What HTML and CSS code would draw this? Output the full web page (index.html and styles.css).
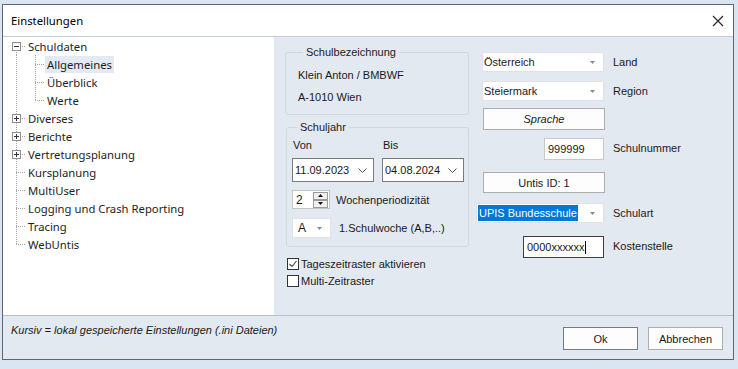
FILE: index.html
```html
<!DOCTYPE html>
<html lang="de">
<head>
    <meta charset="UTF-8">
    <meta name="viewport" content="width=device-width, initial-scale=1.0">
    <title>Einstellungen</title>
    <link rel="stylesheet" href="styles.css">
</head>
<body>
<div class="window">
    <div class="titlebar">
        <span class="title">Einstellungen</span>
        <svg class="close" width="12" height="12" viewBox="0 0 12 12"><path d="M1 1L11 11M11 1L1 11" stroke="#222" stroke-width="1.1"/></svg>
    </div>

    <div class="main">
        <!-- navigation tree -->
        <div class="tree">
            <div class="node"><span class="g first"><svg width="9" height="9"><rect x="0.5" y="0.5" width="8" height="8" fill="#fff" stroke="#8f8f8f"/><path d="M2 4.5H7" stroke="#333"/></svg></span><span class="lbl">Schuldaten</span></div>
            <div class="node"><span class="g pipe"></span><span class="g tee"></span><span class="lbl selected">Allgemeines</span></div>
            <div class="node"><span class="g pipe"></span><span class="g tee"></span><span class="lbl">Überblick</span></div>
            <div class="node"><span class="g pipe"></span><span class="g elbow"></span><span class="lbl">Werte</span></div>
            <div class="node"><span class="g tee"><svg width="9" height="9"><rect x="0.5" y="0.5" width="8" height="8" fill="#fff" stroke="#8f8f8f"/><path d="M2 4.5H7M4.5 2V7" stroke="#333"/></svg></span><span class="lbl">Diverses</span></div>
            <div class="node"><span class="g tee"><svg width="9" height="9"><rect x="0.5" y="0.5" width="8" height="8" fill="#fff" stroke="#8f8f8f"/><path d="M2 4.5H7M4.5 2V7" stroke="#333"/></svg></span><span class="lbl">Berichte</span></div>
            <div class="node"><span class="g tee"><svg width="9" height="9"><rect x="0.5" y="0.5" width="8" height="8" fill="#fff" stroke="#8f8f8f"/><path d="M2 4.5H7M4.5 2V7" stroke="#333"/></svg></span><span class="lbl">Vertretungsplanung</span></div>
            <div class="node"><span class="g tee"></span><span class="lbl">Kursplanung</span></div>
            <div class="node"><span class="g tee"></span><span class="lbl">MultiUser</span></div>
            <div class="node"><span class="g tee"></span><span class="lbl">Logging und Crash Reporting</span></div>
            <div class="node"><span class="g tee"></span><span class="lbl">Tracing</span></div>
            <div class="node"><span class="g elbow"></span><span class="lbl">WebUntis</span></div>
        </div>

        <div class="panel">
            <div class="col-left">
                <fieldset class="group group-name">
                    <legend>Schulbezeichnung</legend>
                    <div class="line">Klein Anton / BMBWF</div>
                    <div class="line">A-1010 Wien</div>
                </fieldset>

                <fieldset class="group group-year">
                    <legend>Schuljahr</legend>
                    <div class="dates">
                        <div class="date-col">
                            <div class="cap">Von</div>
                            <div class="date">11.09.2023<svg width="9" height="5"><path d="M0.5 0.5L4.5 4.5L8.5 0.5" fill="none" stroke="#555"/></svg></div>
                        </div>
                        <div class="date-col">
                            <div class="cap">Bis</div>
                            <div class="date">04.08.2024<svg width="9" height="5"><path d="M0.5 0.5L4.5 4.5L8.5 0.5" fill="none" stroke="#555"/></svg></div>
                        </div>
                    </div>
                    <div class="opt spin-row">
                        <div class="spin">
                            <span class="spin-val">2</span>
                            <span class="spin-btns">
                                <span class="sb"><svg width="5" height="3"><path d="M0 3H5L2.5 0Z" fill="#111"/></svg></span>
                                <span class="sb"><svg width="5" height="3"><path d="M0 0H5L2.5 3Z" fill="#111"/></svg></span>
                            </span>
                        </div>
                        <span>Wochenperiodizität</span>
                    </div>
                    <div class="opt week-row">
                        <div class="combo combo-a">A<svg width="5" height="3"><path d="M0 0H5L2.5 3Z" fill="#8a8a8a"/></svg></div>
                        <span>1.Schulwoche (A,B,..)</span>
                    </div>
                </fieldset>

                <div class="check check-first">
                    <span class="cb"><svg width="10" height="10"><path d="M1.5 5L4 7.5L8.5 2" fill="none" stroke="#444" stroke-width="1.1"/></svg></span>
                    Tageszeitraster aktivieren
                </div>
                <div class="check">
                    <span class="cb"></span>
                    Multi-Zeitraster
                </div>
            </div>

            <div class="col-right">
                <div class="frow r1">
                    <div class="field"><div class="combo w122">Österreich<svg width="5" height="3"><path d="M0 0H5L2.5 3Z" fill="#8a8a8a"/></svg></div></div>
                    <span class="flabel">Land</span>
                </div>
                <div class="frow r2">
                    <div class="field"><div class="combo w122">Steiermark<svg width="5" height="3"><path d="M0 0H5L2.5 3Z" fill="#8a8a8a"/></svg></div></div>
                    <span class="flabel">Region</span>
                </div>
                <div class="frow r3">
                    <div class="field"><div class="btn wide italic">Sprache</div></div>
                </div>
                <div class="frow r4">
                    <div class="field"><div class="input w60">999999</div></div>
                    <span class="flabel">Schulnummer</span>
                </div>
                <div class="frow r5">
                    <div class="field"><div class="btn wide">Untis ID: 1</div></div>
                </div>
                <div class="frow r6">
                    <div class="field"><div class="combo w128"><span class="sel">UPIS Bundesschule</span><svg width="5" height="3"><path d="M0 0H5L2.5 3Z" fill="#8a8a8a"/></svg></div></div>
                    <span class="flabel">Schulart</span>
                </div>
                <div class="frow r7">
                    <div class="field"><div class="input w81 focus">0000xxxxxx<span class="caret"></span></div></div>
                    <span class="flabel">Kostenstelle</span>
                </div>
            </div>
        </div>
    </div>

    <div class="footer">
        <span class="note">Kursiv = lokal gespeicherte Einstellungen (.ini Dateien)</span>
        <div class="buttons">
            <div class="btn dlg default">Ok</div>
            <div class="btn dlg">Abbrechen</div>
        </div>
    </div>
</div>
</body>
</html>
```

FILE: styles.css
```css
body {
    margin: 0;
    background-color: #dbe5f2;
    font-family: "Liberation Sans", Arial, sans-serif;
    font-size: 11px;
    color: #1a1a1a;
}
.window {
    margin: 4px 0 0 2px;
    width: 730px;
    border: 1px solid #5f6670;
    background-color: #e3e9f0;
    display: flex;
    flex-direction: column;
}
.titlebar {
    height: 31px;
    background-color: #fff;
    display: flex;
    align-items: center;
    justify-content: space-between;
    padding: 0 9px 0 8px;
}
.title {
    font-family: "Noto Sans", sans-serif;
    font-size: 11.3px;
    color: #000;
}
.main {
    height: 278px;
    border-top: 1px solid #c5ccd5;
    display: flex;
}

/* tree */
.tree {
    --v: repeating-linear-gradient(to bottom, #a3a3a3 0 1px, transparent 1px 2px);
    --h: repeating-linear-gradient(to right, #a3a3a3 0 1px, transparent 1px 2px);
    width: 271px;
    background-color: #fff;
    padding: 0 0 0 4px;
    box-sizing: border-box;
    font-family: "Noto Sans", sans-serif;
    font-size: 11.3px;
    color: #1e1e1e;
}
.node {
    display: flex;
    align-items: center;
    height: 18px;
}
.g {
    width: 19px;
    height: 18px;
    flex: none;
    display: flex;
    align-items: center;
    padding-left: 5px;
    box-sizing: border-box;
    background-repeat: no-repeat;
}
.g svg {
    display: block;
}
.tee {
    background-image: var(--v), var(--h);
    background-size: 1px 18px, 10px 1px;
    background-position: 9px 0, 9px 9px;
}
.elbow {
    background-image: var(--v), var(--h);
    background-size: 1px 10px, 10px 1px;
    background-position: 9px 0, 9px 9px;
}
.first {
    background-image: var(--v), var(--h);
    background-size: 1px 9px, 10px 1px;
    background-position: 9px 9px, 9px 9px;
}
.pipe {
    background-image: var(--v);
    background-size: 1px 18px;
    background-position: 9px 0;
}
.lbl {
    padding: 0 2px;
    line-height: 17px;
    white-space: nowrap;
}
.lbl.selected {
    background-color: #e4eaf3;
}

/* settings panel */
.panel {
    flex: 1;
    display: flex;
    gap: 7px;
    padding: 9px 0 0 11px;
}
.col-left {
    width: 184px;
    display: flex;
    flex-direction: column;
}
.group {
    margin: 0;
    border: 1px solid #d2d8df;
    border-radius: 3px;
    min-width: 0;
}
.group legend {
    margin-left: 5px;
    padding: 0 3px;
    line-height: 13px;
    color: #222;
}
.group-name {
    padding: 5px 0 6px 12px;
}
.line {
    line-height: 22px;
}
.group-year {
    margin: 6px 0 0 1px;
    padding: 5px 0 8px 5px;
}
.dates {
    display: flex;
    gap: 8px;
}
.cap {
    line-height: 13px;
    padding-left: 1px;
}
.date {
    margin-top: 6px;
    width: 82px;
    height: 24px;
    box-sizing: border-box;
    border: 1px solid #7a7a7a;
    background-color: #fff;
    display: flex;
    align-items: center;
    justify-content: space-between;
    padding: 0 6px 0 2px;
    font-size: 11px;
}
.opt {
    display: flex;
    align-items: center;
    gap: 6px;
}
.spin-row {
    margin-top: 8px;
}
.spin {
    width: 38px;
    height: 19px;
    box-sizing: border-box;
    border: 1px solid #c4c4c4;
    background-color: #fff;
    display: flex;
    align-items: center;
    justify-content: space-between;
    padding-left: 3px;
    font-size: 12px;
}
.spin-btns {
    display: flex;
    flex-direction: column;
    margin-right: 1px;
}
.sb {
    width: 15px;
    height: 8px;
    box-sizing: border-box;
    border: 1px solid #9a9a9a;
    background-color: #f1f1f1;
    display: flex;
    align-items: center;
    justify-content: center;
}
.sb svg {
    display: block;
}
.week-row {
    margin-top: 9px;
    gap: 8px;
}
.combo {
    height: 20px;
    box-sizing: border-box;
    border: 1px solid #e2e2e2;
    background-color: #fff;
    display: flex;
    align-items: center;
    justify-content: space-between;
    padding: 0 8px 0 1px;
}
.combo svg {
    flex: none;
}
.combo-a {
    width: 39px;
    padding-left: 5px;
    font-size: 12px;
}
.check {
    display: flex;
    align-items: center;
    gap: 2px;
    height: 17px;
    margin-left: 2px;
}
.check-first {
    margin-top: 8px;
}
.cb {
    width: 12px;
    height: 12px;
    box-sizing: border-box;
    border: 1px solid #333;
    background-color: #fff;
    display: flex;
    align-items: center;
    justify-content: center;
}

/* right column */
.col-right {
    display: flex;
    flex-direction: column;
}
.frow {
    display: flex;
    align-items: center;
}
.field {
    width: 128px;
    display: flex;
    justify-content: flex-end;
}
.flabel {
    margin-left: 9px;
    line-height: 13px;
    padding-top: 1px;
}
.r1 { margin-top: 6px; }
.r2 { margin-top: 9px; }
.r3 { margin-top: 7px; }
.r4 { margin-top: 8px; }
.r5 { margin-top: 12px; }
.r6 { margin-top: 10px; }
.r7 { margin-top: 13px; }
.r4 .flabel, .r7 .flabel { padding-top: 0; margin-top: -2px; }
.w122 { width: 122px; }
.w128 { width: 128px; }
.combo .sel {
    background-color: #0078d7;
    color: #fff;
    padding: 0 1px;
    line-height: 16px;
    font-size: 11px;
}
.input {
    height: 22px;
    box-sizing: border-box;
    border: 1px solid #c8c8c8;
    background-color: #fff;
    display: flex;
    align-items: center;
    padding-left: 3px;
}
.w60 { width: 60px; }
.w81 { width: 81px; }
.input.focus {
    border-color: #3a3f47;
}
.caret {
    width: 1px;
    height: 13px;
    background-color: #000;
    margin-left: 1px;
}
.btn {
    box-sizing: border-box;
    border: 1px solid #adadad;
    background-color: #fdfdfd;
    display: flex;
    align-items: center;
    justify-content: center;
}
.btn.wide {
    width: 122px;
    margin-right: -1px;
}
.r3 .btn { height: 22px; }
.r5 .btn { height: 21px; }
.italic {
    font-style: italic;
}

/* footer */
.footer {
    height: 43px;
    border-top: 1px solid #b8c0ca;
    display: flex;
    justify-content: space-between;
    align-items: flex-start;
    padding: 0 10px 0 8px;
}
.note {
    margin-top: 7px;
    line-height: 14px;
    font-style: italic;
}
.buttons {
    display: flex;
    gap: 10px;
    margin-top: 11px;
}
.btn.dlg {
    width: 75px;
    height: 23px;
}
.btn.default {
    border-color: #6f7c90;
}
```
